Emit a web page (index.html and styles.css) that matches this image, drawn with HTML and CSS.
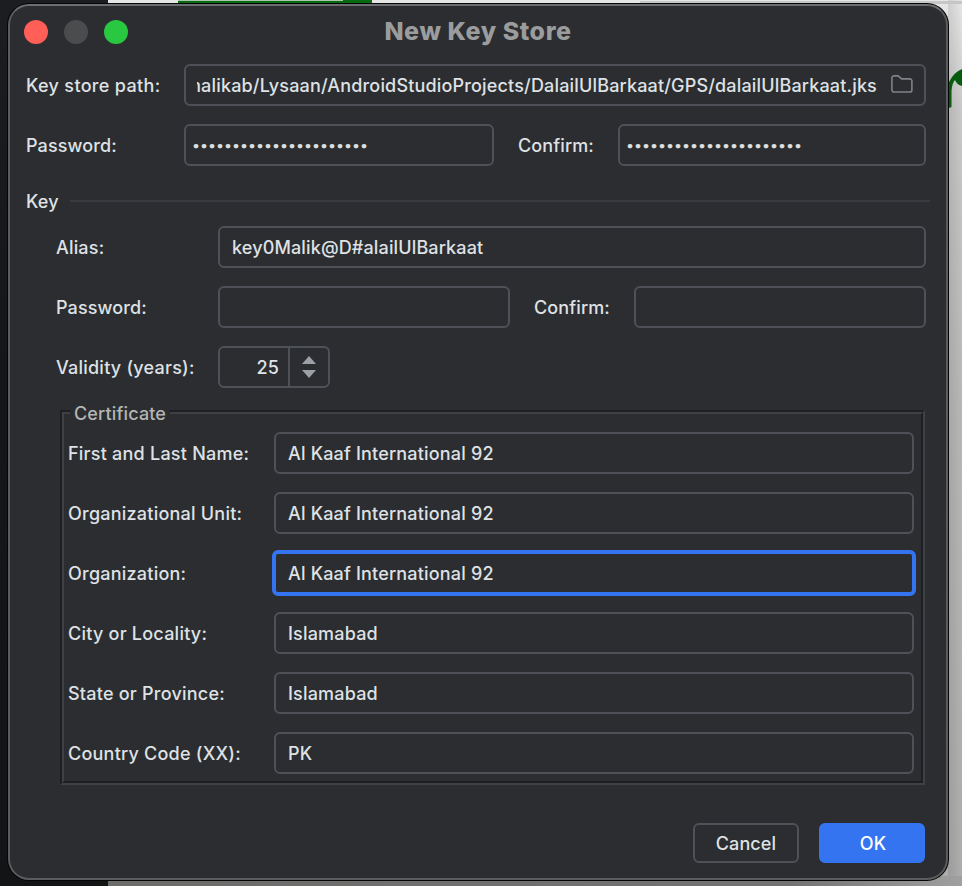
FILE: index.html
```html
<!DOCTYPE html>
<html lang="en">
<head>
<meta charset="utf-8">
<title>New Key Store</title>
<link rel="stylesheet" href="styles.css">
</head>
<body>
<div class="desktop">
  <svg class="scribble" width="14" height="44" viewBox="0 0 14 44" aria-hidden="true">
    <path d="M1 15Q6 5 14 2V19Q9 18 7 13Q4 16 3.5 24L3.5 40L1 41Z" fill="#075b0c"/>
  </svg>
  <main class="window">
    <header class="titlebar">
      <div class="lights"><i class="light close"></i><i class="light minimize"></i><i class="light expand"></i></div>
      <h1 class="title">New Key Store</h1>
    </header>

    <form class="form">
      <div class="row store-row">
        <label class="label path-label">Key store path:</label>
        <div class="field path-field">
          <span class="path-clip"><span class="path">malikab/Lysaan/AndroidStudioProjects/DalailUlBarkaat/GPS/dalailUlBarkaat.jks</span></span>
          <svg class="folder" width="22" height="18" viewBox="0 0 22 18" aria-hidden="true">
            <path d="M.9 3A2.1 2.1 0 0 1 3 .9H7.2L10.6 3.9H18.8A2.1 2.1 0 0 1 20.9 6V14.9A2.1 2.1 0 0 1 18.8 17H3A2.1 2.1 0 0 1 .9 14.9Z" fill="none" stroke="#7f8287" stroke-width="1.6"/>
          </svg>
        </div>
      </div>
      <div class="row store-row passwords">
        <label class="label">Password:</label>
        <div class="field secret">••••••••••••••••••••••</div>
        <label class="label">Confirm:</label>
        <div class="field secret">••••••••••••••••••••••</div>
      </div>

      <div class="section"><span class="section-name">Key</span><span class="rule"></span></div>

      <div class="key">
        <div class="row key-row">
          <label class="label">Alias:</label>
          <div class="field alias">key0Malik@D#alailUlBarkaat</div>
        </div>
        <div class="row key-row passwords">
          <label class="label">Password:</label>
          <div class="field"></div>
          <label class="label">Confirm:</label>
          <div class="field"></div>
        </div>
        <div class="row key-row">
          <label class="label validity">Validity (years):</label>
          <div class="field spinner">
            <span class="years">25</span>
            <span class="arrows">
              <svg width="14" height="22" viewBox="0 0 14 22" aria-hidden="true"><path d="M0 8L7 0L14 8ZM0 14H14L7 22Z" fill="#9da0a6"/></svg>
            </span>
          </div>
        </div>
      </div>

      <section class="certificate">
        <h2 class="legend">Certificate</h2>
        <div class="row cert-row"><label class="label">First and Last Name:</label><div class="field">Al Kaaf International 92</div></div>
        <div class="row cert-row"><label class="label">Organizational Unit:</label><div class="field">Al Kaaf International 92</div></div>
        <div class="row cert-row"><label class="label">Organization:</label><div class="field focused">Al Kaaf International 92</div></div>
        <div class="row cert-row"><label class="label">City or Locality:</label><div class="field">Islamabad</div></div>
        <div class="row cert-row"><label class="label">State or Province:</label><div class="field">Islamabad</div></div>
        <div class="row cert-row"><label class="label">Country Code (XX):</label><div class="field">PK</div></div>
      </section>

      <footer class="actions">
        <button class="button" type="button">Cancel</button>
        <button class="button primary" type="button">OK</button>
      </footer>
    </form>
  </main>
</div>
</body>
</html>
```

FILE: styles.css
```css
* { box-sizing: border-box; }

body {
  margin: 0;
  font-family: Inter, "Liberation Sans", sans-serif;
  font-size: 18px;
  font-weight: 450;
  line-height: 22px;
  letter-spacing: 0.18px;
  color: #dfe1e5;
}

.desktop {
  position: relative;
  width: 962px;
  height: 886px;
  overflow: hidden;
  padding: 4px 14px 6px 8px;
  background:
    linear-gradient(#c6c6c6, #c6c6c6) 640px 1px / 322px 3px no-repeat,
    linear-gradient(#a9c6aa, #a9c6aa) 178px 0 / 165px 1px no-repeat,
    linear-gradient(#086a10, #086a10) 178px 0 / 194px 4px no-repeat,
    linear-gradient(#1c1d21, #151618 40%, #131416) 0 0 / 108px 886px no-repeat,
    linear-gradient(90deg, #6c6c6b, #737373 80%, #a0a0a0) 108px 876px / 854px 10px no-repeat,
    linear-gradient(90deg, rgba(0, 0, 0, 0.1), transparent) 948px 0 / 14px 886px no-repeat,
    linear-gradient(#e6e6e6, #c9c9c9 110px, #b8b8b8 400px, #adadad);
}

.scribble { position: absolute; left: 948px; top: 67px; }

.window {
  position: relative;
  height: 876px;
  border: 2px solid #595b5d;
  border-top-color: #6b6d6e;
  border-radius: 21px;
  background: #2b2d30;
  box-shadow: 0 0 0 1px #050505;
}

.titlebar {
  display: grid;
  grid-template-columns: 104px 1fr 104px;
  align-items: center;
  height: 52px;
  padding: 0 14px;
}
.lights { display: flex; gap: 16px; }
.light { width: 24px; height: 24px; border-radius: 50%; }
.close { background: #ff5f57; }
.minimize { background: #4b4c4e; }
.expand { background: #28c840; }
.title {
  margin: 0;
  padding-bottom: 2px;
  text-align: center;
  font-size: 25px;
  line-height: 30px;
  font-weight: 780;
  letter-spacing: 0.55px;
  color: #9b9c9e;
}

.form { padding: 6px 20px 0 16px; }

.row { display: grid; align-items: center; height: 42px; }
.row + .row { margin-top: 18px; }
.label { padding-top: 2px; white-space: nowrap; }
.store-row { grid-template-columns: 158px 1fr; }
.store-row.passwords { grid-template-columns: 158px 310px 124px 308px; }
.key-row { grid-template-columns: 162px 1fr; }
.key-row.passwords { grid-template-columns: 162px 292px 124px 292px; }
.passwords .label { letter-spacing: 0.12px; }
.passwords .label:nth-child(3) { padding-left: 24px; }
.cert-row { grid-template-columns: 206px 1fr; }
.cert-row .label, .validity { letter-spacing: 0.23px; }
.path-label { letter-spacing: 0.33px; }

.field {
  display: flex;
  align-items: center;
  height: 42px;
  min-width: 0;
  padding: 2px 12px 0;
  border: 2px solid #4e5157;
  border-radius: 6px;
  white-space: nowrap;
}
.alias { letter-spacing: 0.14px; }
.focused {
  height: 46px;
  margin: -2px;
  border: 4px solid #3574f0;
}

.path-field { padding: 2px 11px 0 11px; justify-content: space-between; }
.path-clip { display: flex; justify-content: flex-end; width: 680px; overflow: hidden; }
.path { letter-spacing: 0.17px; }
.folder { flex: none; margin-top: -4px; }

.secret {
  padding: 4px 0 0 6px;
  font-family: "Liberation Mono", monospace;
  font-size: 13.33px;
  font-weight: 700;
  letter-spacing: 0;
  -webkit-text-stroke: 0.7px #dfe1e5;
}

.section { display: flex; align-items: center; gap: 11px; height: 22px; margin: 25px -4px 0 0; }
.rule { flex: 1; height: 2px; margin-top: -2px; background: #393b40; }

.key { margin: 13px 0 0 30px; }

.spinner { width: 112px; padding: 0; }
.years { width: 68px; padding: 2px 9px 0 0; text-align: right; }
.arrows {
  display: flex;
  flex: 1;
  align-items: center;
  justify-content: center;
  height: 38px;
  border-left: 2px solid #4e5157;
}

.certificate {
  position: relative;
  width: 865px;
  height: 375px;
  margin: 22px 0 0 34px;
  padding: 0 9px 0 6px;
  border: 2px solid;
  border-color: #1e1f22 #3f4145 #3f4145 #1e1f22;
}
.certificate::before {
  content: "";
  position: absolute;
  inset: 0;
  border: 2px solid;
  border-color: #3f4145 #1e1f22 #1e1f22 #3f4145;
}
.legend {
  position: relative;
  width: 100px;
  height: 22px;
  margin: -9px 0 7px 2px;
  padding-left: 4px;
  background: #2b2d30;
  font-size: 18px;
  font-weight: 450;
  letter-spacing: 0.15px;
  color: #b4b5b4;
}
.certificate .row { position: relative; }

.actions { display: flex; justify-content: flex-end; gap: 20px; margin: 38px 1px 0 0; }
.button {
  width: 106px;
  height: 40px;
  padding: 2px 0 0;
  border: 2px solid #4e5157;
  border-radius: 6px;
  background: transparent;
  color: inherit;
  font: inherit;
  letter-spacing: 0.1px;
}
.primary { padding-left: 2px; border-color: #3574f0; background: #3574f0; color: #fff; font-weight: 550; }
```
